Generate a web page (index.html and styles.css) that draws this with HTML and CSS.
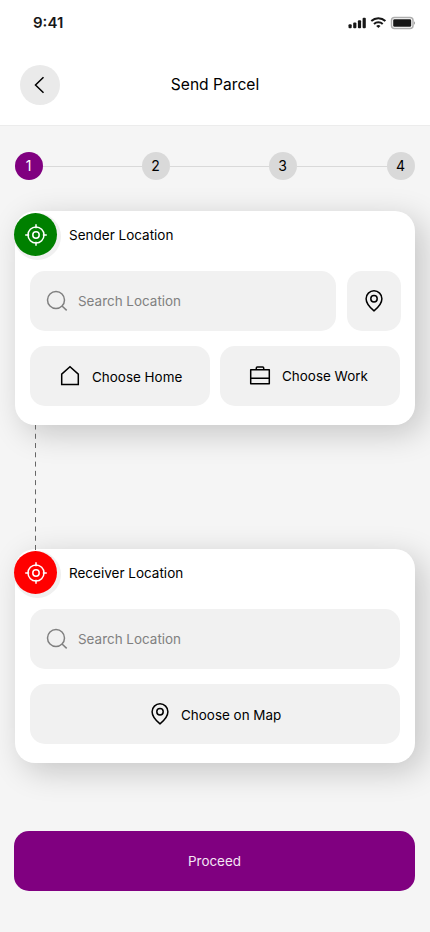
FILE: index.html
```html
<!DOCTYPE html>
<html lang="en">
<head>
<meta charset="utf-8">
<meta name="viewport" content="width=device-width, initial-scale=1">
<title>Send Parcel</title>
<link rel="stylesheet" href="styles.css">
</head>
<body>
<svg class="defs" width="0" height="0" aria-hidden="true">
  <symbol id="target" viewBox="0 0 24 24"><circle cx="12" cy="12" r="8"/><circle cx="12" cy="12" r="3.2"/><path d="M12 1.2v4M12 18.8v4M1.2 12h4M18.8 12h4"/></symbol>
  <symbol id="search" viewBox="0 0 24 24"><circle cx="10" cy="11" r="8.5"/><path d="M16 17l4.700 4.400"/></symbol>
  <symbol id="pin" viewBox="0 0 24 24"><path d="M12 21.8C8.8 19.2 4.1 14.6 4.1 9.7a7.9 7.9 0 0 1 15.8 0c0 4.900-4.700 9.500-7.900 12.100z"/><circle cx="12" cy="9.800" r="3.200"/></symbol>
</svg>
<header class="header">
  <div class="status">
    <span class="time">9:41</span>
    <svg class="status-icons" width="68" height="14" viewBox="0 0 68 14">
      <g fill="#171717"><rect x=".5" y="8.200" width="3.200" height="4" rx="1"/><rect x="5.200" y="6.500" width="3.200" height="5.700" rx="1"/><rect x="9.900" y="4.300" width="3.200" height="7.900" rx="1"/><rect x="14.600" y="1.700" width="3.200" height="10.500" rx="1"/></g>
      <g fill="none" stroke="#171717" stroke-width="2"><path d="M23.300 5.100a10.300 10.300 0 0 1 14.100 0"/><path d="M26 7.900a6.400 6.400 0 0 1 8.700 0"/></g>
      <path fill="#171717" d="M28.200 9.900a3.300 3.300 0 0 1 4.300 0L30.400 12.100z"/>
      <rect x="43.500" y="1.500" width="21.500" height="11" rx="3" fill="none" stroke="#171717" stroke-opacity=".35"/>
      <rect x="45.200" y="3.300" width="18" height="7.400" rx="1.300" fill="#171717"/>
      <path fill="#171717" fill-opacity=".4" d="M66 5.200c1.400.6 1.400 3 0 3.600z"/>
    </svg>
  </div>
  <div class="bar">
    <button class="back" aria-label="Back"><svg width="40" height="40" viewBox="0 0 40 40"><path d="M23.500 12.200L15.500 20l8 7.800"/></svg></button>
    <h1 class="title">Send Parcel</h1>
  </div>
</header>
<main class="main">
  <div class="steps">
    <span class="step active">1</span><i class="rail wide"></i><span class="step">2</span><i class="rail wide"></i><span class="step">3</span><i class="rail"></i><span class="step">4</span>
  </div>
  <section class="card">
    <div class="card-head">
      <span class="marker sender"><svg width="24" height="24"><use href="#target"/></svg></span>
      <h2 class="label">Sender Location</h2>
    </div>
    <div class="row search-row">
      <div class="field search"><svg width="24" height="24"><use href="#search"/></svg><span class="placeholder">Search Location</span></div>
      <button class="field map" aria-label="Map"><svg width="24" height="24"><use href="#pin"/></svg></button>
    </div>
    <div class="row">
      <button class="field home"><svg width="24" height="24" viewBox="0 0 24 24"><path d="M3.700 20.500V10.200L12 2.800l8.300 7.400v10.300z"/></svg><span class="home-text">Choose Home</span></button>
      <button class="field work"><svg width="24" height="24" viewBox="0 0 24 24"><path stroke-linejoin="round" d="M2.700 5.700h18.600v14H2.700zM2.700 14.200h18.600M8.300 5.600V4q0-1 1-1h5.400q1 0 1 1v1.600"/></svg><span class="work-text">Choose Work</span></button>
    </div>
  </section>
  <svg class="connector" width="1" height="126" viewBox="0 0 1 126"><path d="M.5 0v126"/></svg>
  <section class="card">
    <div class="card-head">
      <span class="marker receiver"><svg width="24" height="24"><use href="#target"/></svg></span>
      <h2 class="label">Receiver Location</h2>
    </div>
    <div class="row search-row">
      <div class="field search"><svg width="24" height="24"><use href="#search"/></svg><span class="placeholder">Search Location</span></div>
    </div>
    <div class="row">
      <button class="field choose-map"><svg width="24" height="24"><use href="#pin"/></svg><span class="map-text">Choose on Map</span></button>
    </div>
  </section>
  <button class="proceed"><span class="proceed-text">Proceed</span></button>
</main>
</body>
</html>
```
FILE: styles.css
```css
* { box-sizing: border-box; }
body { margin: 0; width: 430px; height: 932px; overflow: hidden; background: #f5f5f5; color: #000; font: 400 13.45px/20px Inter, "Liberation Sans", sans-serif; }
button { border: 0; padding: 0; font: inherit; color: inherit; }
h1, h2 { margin: 0; font-weight: 400; }
svg { display: block; flex: none; fill: none; stroke: currentColor; stroke-width: 1.5; }
.defs { position: absolute; }
.header { height: 126px; background: #fff; border-bottom: 1px solid #ececec; }
.status { height: 65px; display: flex; justify-content: space-between; padding: 13px 14px 0 33px; }
.time { font-size: 15px; font-weight: 600; color: #171717; }
.status-icons { margin-top: 3px; stroke: none; }
.bar { display: grid; grid-template-columns: 40px 1fr 40px; align-items: center; padding: 0 20px; }
.back { width: 40px; height: 40px; border-radius: 50%; background: #eaeaea; }
.title { font-size: 15.6px; text-align: center; white-space: nowrap; }
.main { padding: 26px 15px 0; }
.steps { display: flex; align-items: center; margin-bottom: 31px; }
.step { width: 28px; height: 28px; border-radius: 50%; background: #d9d9d9; text-align: center; font-size: 14px; line-height: 28px; padding-right: 1px; }
.step.active { background: #800080; color: #fff; }
.rail { width: 90px; height: 1px; background: #d9d9d9; }
.rail.wide { width: 99px; }
.card { height: 214px; border-radius: 20px; background: #fff; box-shadow: 8px 8px 32px rgba(0, 0, 0, .2); }
.card-head { height: 60px; display: flex; align-items: flex-start; gap: 12px; padding-top: 2px; }
.marker { width: 43px; height: 43px; margin-left: -1px; border-radius: 50%; display: flex; align-items: center; justify-content: center; color: #fff; box-shadow: 2px 2px 0 2px #f0f0f0; }
.sender { background: #008000; }
.receiver { background: #f00; }
.label { margin-top: 12px; font-size: 13.5px; }
.row { display: flex; gap: 10px; padding: 0 15px; }
.search-row { gap: 11px; padding-right: 14px; margin-bottom: 15px; }
.search-row:has(.search:only-child) { padding-right: 15px; }
.field { height: 60px; border-radius: 15px; background: #f1f1f1; display: flex; align-items: center; white-space: nowrap; }
.search { flex: 1; padding-left: 16px; gap: 8px; color: #808080; }
.map { width: 54px; justify-content: center; }
.home { flex: 1; padding-left: 28px; gap: 10px; }
.work { flex: 1; padding-left: 28px; gap: 10px; }
.home-text { padding-top: 2px; }
.choose-map { flex: 1; padding-left: 118px; gap: 9px; }
.map-text { padding-top: 2px; }
.connector { margin: 0 0 -2px 20px; stroke: #666; stroke-width: 1; stroke-dasharray: 5 4.27; stroke-dashoffset: .5; position: relative; z-index: 1; }
.proceed { display: block; width: 401px; height: 60px; margin: 68px 0 0 -1px; border-radius: 15px; background: #800080; color: #f4e6f4; }
```
